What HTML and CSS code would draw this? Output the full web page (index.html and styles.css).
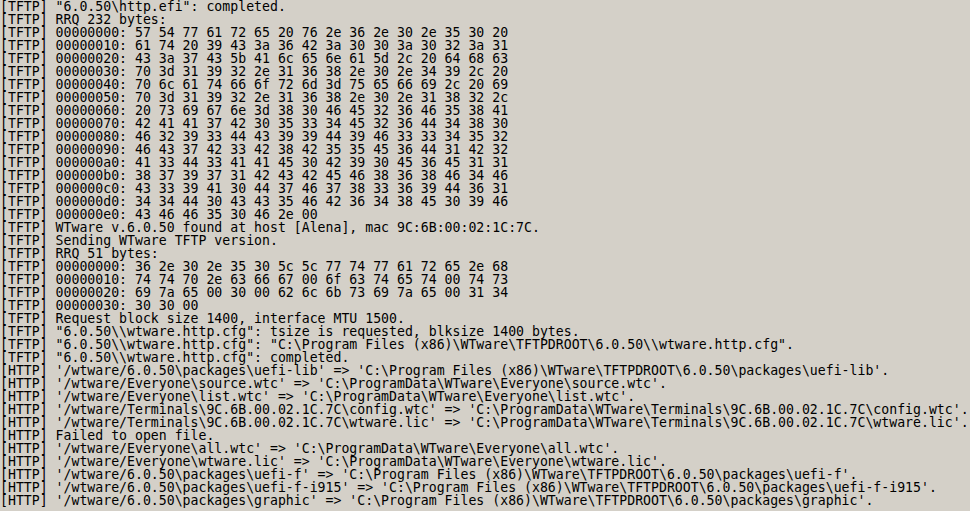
FILE: index.html
```html
<!DOCTYPE html>
<html>
<head>
<meta charset="utf-8">
<link rel="stylesheet" href="styles.css">
</head>
<body>
<div class="log">
<div class="line">[TFTP] "6.0.50\http.efi": completed.</div>
<div class="line">[TFTP] RRQ 232 bytes:</div>
<div class="line">[TFTP] 00000000: 57 54 77 61 72 65 20 76 2e 36 2e 30 2e 35 30 20</div>
<div class="line">[TFTP] 00000010: 61 74 20 39 43 3a 36 42 3a 30 30 3a 30 32 3a 31</div>
<div class="line">[TFTP] 00000020: 43 3a 37 43 5b 41 6c 65 6e 61 5d 2c 20 64 68 63</div>
<div class="line">[TFTP] 00000030: 70 3d 31 39 32 2e 31 36 38 2e 30 2e 34 39 2c 20</div>
<div class="line">[TFTP] 00000040: 70 6c 61 74 66 6f 72 6d 3d 75 65 66 69 2c 20 69</div>
<div class="line">[TFTP] 00000050: 70 3d 31 39 32 2e 31 36 38 2e 30 2e 31 38 32 2c</div>
<div class="line">[TFTP] 00000060: 20 73 69 67 6e 3d 38 30 46 45 32 36 46 35 38 41</div>
<div class="line">[TFTP] 00000070: 42 41 41 37 42 30 35 33 34 45 32 36 44 34 38 30</div>
<div class="line">[TFTP] 00000080: 46 32 39 33 44 43 39 39 44 39 46 33 33 34 35 32</div>
<div class="line">[TFTP] 00000090: 46 43 37 42 33 42 38 42 35 35 45 36 44 31 42 32</div>
<div class="line">[TFTP] 000000a0: 41 33 44 33 41 41 45 30 42 39 30 45 36 45 31 31</div>
<div class="line">[TFTP] 000000b0: 38 37 39 37 31 42 43 42 45 46 38 36 38 46 34 46</div>
<div class="line">[TFTP] 000000c0: 43 33 39 41 30 44 37 46 37 38 33 36 39 44 36 31</div>
<div class="line">[TFTP] 000000d0: 34 34 44 30 43 43 35 46 42 36 34 38 45 30 39 46</div>
<div class="line">[TFTP] 000000e0: 43 46 46 35 30 46 2e 00</div>
<div class="line">[TFTP] WTware v.6.0.50 found at host [Alena], mac 9C:6B:00:02:1C:7C.</div>
<div class="line">[TFTP] Sending WTware TFTP version.</div>
<div class="line">[TFTP] RRQ 51 bytes:</div>
<div class="line">[TFTP] 00000000: 36 2e 30 2e 35 30 5c 5c 77 74 77 61 72 65 2e 68</div>
<div class="line">[TFTP] 00000010: 74 74 70 2e 63 66 67 00 6f 63 74 65 74 00 74 73</div>
<div class="line">[TFTP] 00000020: 69 7a 65 00 30 00 62 6c 6b 73 69 7a 65 00 31 34</div>
<div class="line">[TFTP] 00000030: 30 30 00</div>
<div class="line">[TFTP] Request block size 1400, interface MTU 1500.</div>
<div class="line">[TFTP] "6.0.50\\wtware.http.cfg": tsize is requested, blksize 1400 bytes.</div>
<div class="line">[TFTP] "6.0.50\\wtware.http.cfg": "C:\Program Files (x86)\WTware\TFTPDROOT\6.0.50\\wtware.http.cfg".</div>
<div class="line">[TFTP] "6.0.50\\wtware.http.cfg": completed.</div>
<div class="line">[HTTP] '/wtware/6.0.50\packages\uefi-lib' =&gt; 'C:\Program Files (x86)\WTware\TFTPDROOT\6.0.50\packages\uefi-lib'.</div>
<div class="line">[HTTP] '/wtware/Everyone\source.wtc' =&gt; 'C:\ProgramData\WTware\Everyone\source.wtc'.</div>
<div class="line">[HTTP] '/wtware/Everyone\list.wtc' =&gt; 'C:\ProgramData\WTware\Everyone\list.wtc'.</div>
<div class="line">[HTTP] '/wtware/Terminals\9C.6B.00.02.1C.7C\config.wtc' =&gt; 'C:\ProgramData\WTware\Terminals\9C.6B.00.02.1C.7C\config.wtc'.</div>
<div class="line">[HTTP] '/wtware/Terminals\9C.6B.00.02.1C.7C\wtware.lic' =&gt; 'C:\ProgramData\WTware\Terminals\9C.6B.00.02.1C.7C\wtware.lic'.</div>
<div class="line">[HTTP] Failed to open file.</div>
<div class="line">[HTTP] '/wtware/Everyone\all.wtc' =&gt; 'C:\ProgramData\WTware\Everyone\all.wtc'.</div>
<div class="line">[HTTP] '/wtware/Everyone\wtware.lic' =&gt; 'C:\ProgramData\WTware\Everyone\wtware.lic'.</div>
<div class="line">[HTTP] '/wtware/6.0.50\packages\uefi-f' =&gt; 'C:\Program Files (x86)\WTware\TFTPDROOT\6.0.50\packages\uefi-f'.</div>
<div class="line">[HTTP] '/wtware/6.0.50\packages\uefi-f-i915' =&gt; 'C:\Program Files (x86)\WTware\TFTPDROOT\6.0.50\packages\uefi-f-i915'.</div>
<div class="line">[HTTP] '/wtware/6.0.50\packages\graphic' =&gt; 'C:\Program Files (x86)\WTware\TFTPDROOT\6.0.50\packages\graphic'.</div>
</div>
</body>
</html>
```

FILE: styles.css
```css
html, body {
  margin: 0;
  padding: 0;
  background: #d4d0c8;
  overflow: hidden;
}

.log {
  width: 970px;
  height: 511px;
  overflow: hidden;
  padding: 0 0 0 0;
  box-sizing: border-box;
  font-family: "DejaVu Sans Mono", "Liberation Mono", monospace;
  font-size: 13.2px;
  line-height: 13px;
  color: #000;
}

.line {
  white-space: pre;
  height: 13px;
}
```
